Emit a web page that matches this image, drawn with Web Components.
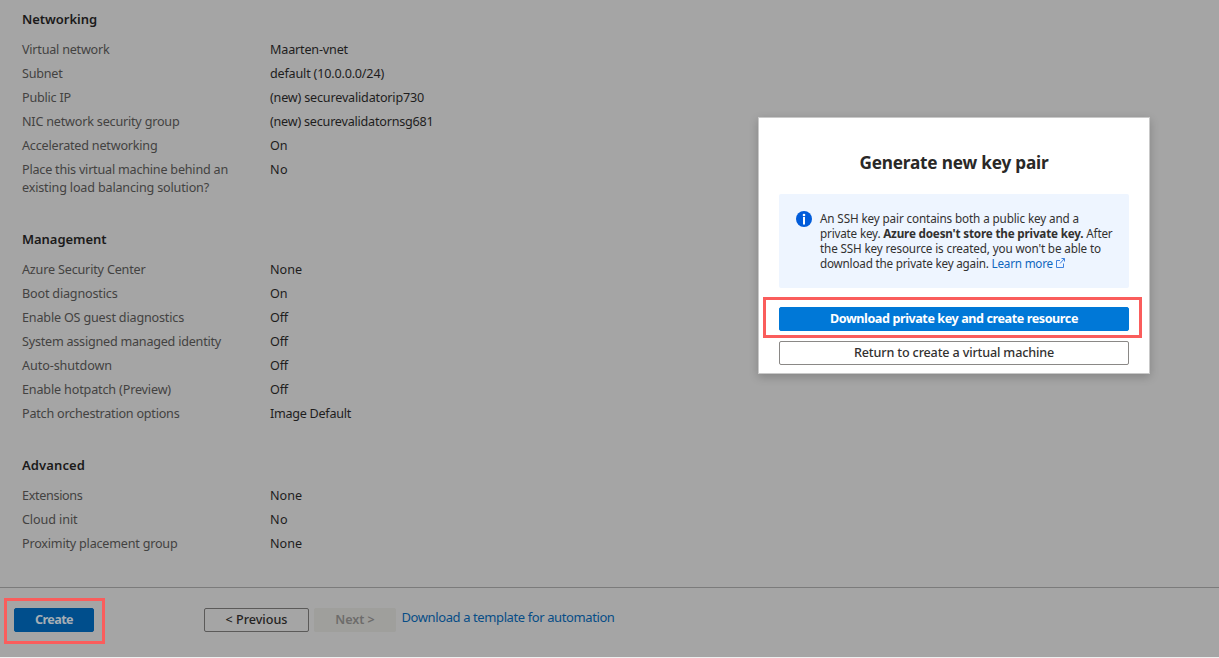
<!DOCTYPE html>
<html lang="en">
<head>
<meta charset="utf-8">
<title>Create a virtual machine</title>
<style>
html, body { margin: 0; height: 658px; overflow: hidden; }
body { background: #f0efef; font-family: "Noto Sans", "Open Sans", sans-serif; font-size: 12.6px; line-height: 18px; color: #1b1a1a; }
</style>
</head>
<body>
<vm-page></vm-page>
<script>
const define = (name, html, setup) => customElements.define(name, class extends HTMLElement {
  connectedCallback() {
    if (this.shadowRoot) return;
    this.attachShadow({ mode: 'open' }).innerHTML = html;
    if (setup) setup(this);
  }
});

// Text line tracked out or in to the width given by its "w" attribute.
define('fit-text', `<style>:host{display:inline-block;white-space:nowrap;vertical-align:top}span{display:inline-block;white-space:nowrap}</style><span><slot></slot></span>`, el => {
  const w = parseFloat(el.getAttribute('w'));
  requestAnimationFrame(() => {
    const s = el.shadowRoot.querySelector('span');
    const n = el.textContent.length;
    const spacing = (w - s.getBoundingClientRect().width) / n;
    s.style.letterSpacing = spacing.toFixed(4) + 'px';
  });
});

define('summary-row', `<style>
:host{display:grid;grid-template-columns:248px 1fr;padding:3px 0}
.label{color:#434241;display:flex;flex-direction:column;align-items:flex-start}
.value{color:#1e1d1d}
</style><div class="label"><slot name="label"></slot></div><div class="value"><slot></slot></div>`);

define('summary-section', `<style>
:host{display:block}
h2{margin:0 0 10px;font-size:13px;line-height:18px;font-weight:600;color:#1b1a1a}
</style><h2><slot name="title"></slot></h2><slot></slot>`);

define('ui-button', `<style>
:host{display:block;position:relative;height:24px;box-sizing:border-box;flex:none}
button{all:unset;box-sizing:border-box;width:100%;height:24px;display:flex;align-items:center;justify-content:center;border-radius:2px;border:1px solid var(--edge);background:var(--fill);color:var(--ink);font-weight:var(--weight,600)}
:host([marked])::after{content:"";position:absolute;box-sizing:border-box;inset:var(--ring);border:3px solid #fa5d5c;pointer-events:none}
</style><button><slot></slot></button>`);

define('page-footer', `<style>
:host{display:flex;box-sizing:border-box;height:70px;border-top:1px solid #7b7b7b;padding:20px 14px 0}
.create{width:80px;margin-right:110px;--fill:#004e8c;--edge:#004e8c;--ink:#a6aeb5;--weight:700;--ring:-10px -11px -12px -10px}
.prev{width:105px;margin-right:5px;--fill:transparent;--edge:#5b5a59;--ink:#242322;--weight:500}
.next{width:82px;margin-right:5.5px;--fill:#9f9f9c;--edge:#9f9f9c;--ink:#6d6c6b}
a{color:#074d87;height:18px;font-size:13px}
</style>
<ui-button class="create" marked><fit-text w="38">Create</fit-text></ui-button>
<ui-button class="prev"><fit-text w="62">&lt; Previous</fit-text></ui-button>
<ui-button class="next"><fit-text w="39.5">Next &gt;</fit-text></ui-button>
<a><fit-text w="213">Download a template for automation</fit-text></a>`);

define('info-box', `<style>
:host{display:flex;box-sizing:border-box;height:94px;padding:17px 0 0 17px;gap:8px;background:#eef5ff;border-radius:2px;color:#323130;font-size:11.7px;line-height:15px}
svg{display:block;flex:none}
.copy{display:flex;flex-direction:column;align-items:flex-start}
b{font-weight:700}
.last{display:flex;gap:3px}
a{color:#0f66bd}
.last svg{margin-top:2px}
</style>
<svg width="16" height="16" viewBox="0 0 16 16"><circle cx="8" cy="8" r="8" fill="#015cda"/><circle cx="8" cy="4" r="1.3" fill="#fff"/><rect x="7" y="6" width="2" height="7.5" fill="#fff"/></svg>
<div class="copy">
<fit-text w="259">An SSH key pair contains both a public key and a</fit-text>
<fit-text w="292.5">private key. <b>Azure doesn't store the private key.</b> After</fit-text>
<fit-text w="281">the SSH key resource is created, you won't be able to</fit-text>
<div class="last"><fit-text w="233">download the private key again. <a>Learn more</a></fit-text>
<svg width="10" height="10" viewBox="0 0 10 10" fill="none" stroke="#3f83df" stroke-width="1"><path d="M4 2.5H.5v7h7V5.5M5.5.5h3v3M8.3.7 4 5.5"/></svg></div>
</div>`);

define('key-dialog', `<style>
:host{display:block;box-sizing:border-box;width:392px;height:257px;border:1px solid #c9c9c9;background:#fff;padding:33px 20px 0;box-shadow:0 3px 9px rgba(0,0,0,.2)}
h1{margin:0 0 19px;height:24px;font-size:17.2px;line-height:24px;font-weight:700;color:#292827;text-align:center}
info-box{margin-bottom:19px}
.primary{--fill:#0078d7;--edge:#0078d7;--ink:#fff;--weight:700;--ring:-10px -13px -7px -16px;margin-bottom:10px}
.second{--fill:#fff;--edge:#8a8886;--ink:#323130;--weight:500}
</style>
<h1><fit-text w="189">Generate new key pair</fit-text></h1>
<info-box></info-box>
<ui-button class="primary" marked><fit-text w="248">Download private key and create resource</fit-text></ui-button>
<ui-button class="second"><fit-text w="200">Return to create a virtual machine</fit-text></ui-button>`);

const row = (label, value) => `<summary-row>${label.map(([t, w]) => `<fit-text slot="label" w="${w}">${t}</fit-text>`).join('')}<fit-text w="${value[1]}">${value[0]}</fit-text></summary-row>`;
const section = ([title, w], rows) => `<summary-section><fit-text slot="title" w="${w}">${title}</fit-text>${rows.map(r => row(r.slice(0, -1), r[r.length - 1])).join('')}</summary-section>`;

define('vm-page', `<style>
:host{display:flex;flex-direction:column;position:relative;width:1219px;height:657px;background:#a5a5a5}
main{flex:1;box-sizing:border-box;padding:10px 22px 0;display:flex;flex-direction:column;gap:30px}
key-dialog{position:absolute;left:758px;top:117px}
</style>
<main>
${section(['Networking', 75], [
  [['Virtual network', 87.5], ['Maarten-vnet', 78]],
  [['Subnet', 40.5], ['default (10.0.0.0/24)', 114]],
  [['Public IP', 49], ['(new) securevalidatorip730', 154]],
  [['NIC network security group', 157.5], ['(new) securevalidatornsg681', 163.5]],
  [['Accelerated networking', 135.5], ['On', 17.5]],
  [['Place this virtual machine behind an', 206], ['existing load balancing solution?', 187], ['No', 18]]
])}
${section(['Management', 84.5], [
  [['Azure Security Center', 123.5], ['None', 32]],
  [['Boot diagnostics', 95.5], ['On', 17.5]],
  [['Enable OS guest diagnostics', 162], ['Off', 18]],
  [['System assigned managed identity', 199], ['Off', 18]],
  [['Auto-shutdown', 90], ['Off', 18]],
  [['Enable hotpatch (Preview)', 149], ['Off', 18]],
  [['Patch orchestration options', 157.5], ['Image Default', 81]]
])}
${section(['Advanced', 63], [
  [['Extensions', 60.5], ['None', 32]],
  [['Cloud init', 55.5], ['No', 18]],
  [['Proximity placement group', 155.5], ['None', 32]]
])}
</main>
<page-footer></page-footer>
<key-dialog></key-dialog>`);
</script>
</body>
</html>
